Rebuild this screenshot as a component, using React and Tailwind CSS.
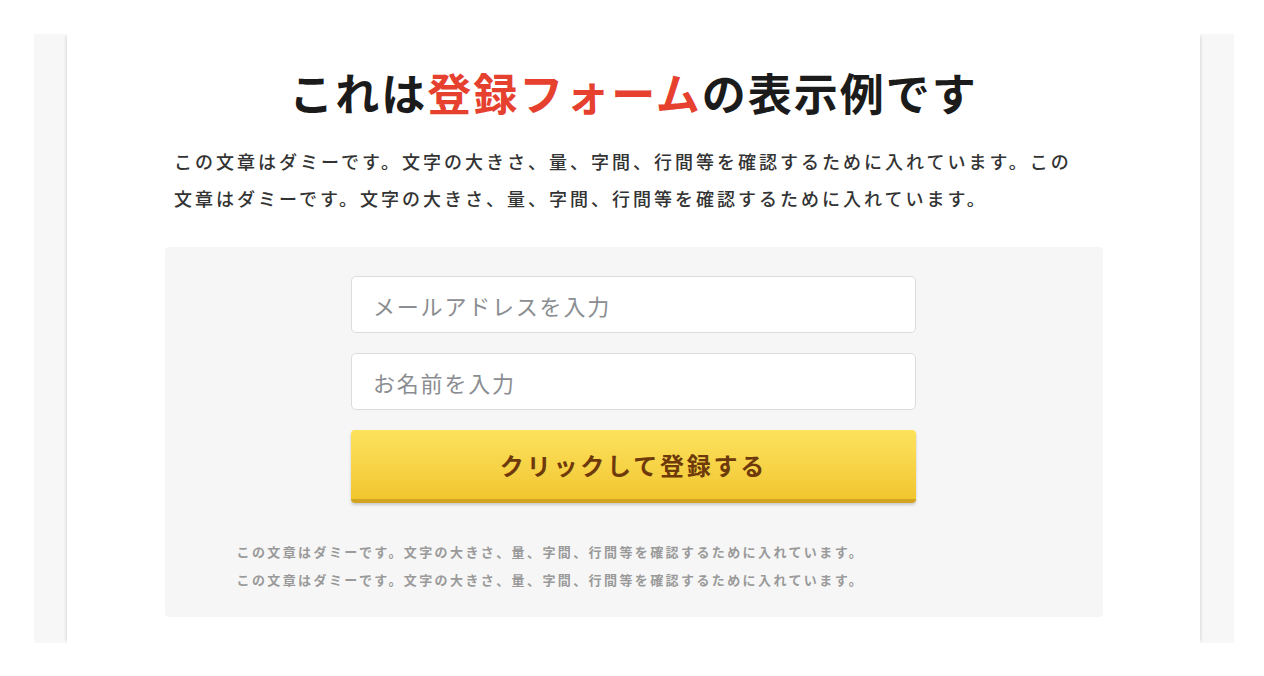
export default function App() {
  const font = { fontFamily: '"Noto Sans CJK JP", "Noto Sans", sans-serif' };
  const note = "この文章はダミーです。文字の大きさ、量、字間、行間等を確認するために入れています。";

  return (
    <div className="min-h-[676px] bg-white pt-[34px] pl-[34px]" style={font}>
      {/* frame */}
      <div className="w-[1200px] h-[609px] bg-[#f7f7f7] pl-[33px] flex">
        <div className="w-[1133px] h-full bg-white shadow-[3px_0_3px_-2px_rgba(0,0,0,0.12),-3px_0_3px_-2px_rgba(0,0,0,0.12)] flex flex-col items-center">
          <h1 className="pt-[25px] text-[44px] leading-[66px] font-bold tracking-[2px] text-[#1b1b1b]">
            これは<span className="text-[#e6402f]">登録フォーム</span>の表示例です
          </h1>

          <p className="self-start ml-[107px] w-[906px] mt-[18px] text-[18px] leading-[37px] tracking-[3px] font-medium text-[#333]">
            この文章はダミーです。文字の大きさ、量、字間、行間等を確認するために入れています。この文章はダミーです。文字の大きさ、量、字間、行間等を確認するために入れています。
          </p>

          {/* form box */}
          <div className="w-[938px] mt-[30px] bg-[#f6f6f6] rounded-[4px] pt-[29px] pb-[23px] flex flex-col items-center">
            <div className="w-[565px] flex flex-col gap-[20px]">
              <input
                type="text"
                placeholder="メールアドレスを入力"
                className="h-[57px] w-full bg-white border border-[#dcdcdc] rounded-[5px] px-[21px] text-[22px] tracking-[1.8px] placeholder:text-[#8a8d91] outline-none"
                style={font}
              />
              <input
                type="text"
                placeholder="お名前を入力"
                className="h-[57px] w-full bg-white border border-[#dcdcdc] rounded-[5px] px-[21px] text-[22px] tracking-[1.8px] placeholder:text-[#8a8d91] outline-none"
                style={font}
              />
              <button
                className="h-[73px] w-full rounded-[4px] bg-gradient-to-b from-[#fde25c] to-[#f1c62f] border-b-[4px] border-[#d3a422] shadow-[0_2px_3px_rgba(0,0,0,0.18)] text-[24px] font-bold tracking-[2.8px] text-[#6e3a0c]"
                style={font}
              >
                クリックして登録する
              </button>
            </div>

            <div className="w-[794px] mt-[35px] text-[13px] leading-[28px] tracking-[2.4px] font-semibold text-[#9a9a9a]">
              <p>{note}</p>
              <p>{note}</p>
            </div>
          </div>
        </div>
      </div>
    </div>
  );
}
